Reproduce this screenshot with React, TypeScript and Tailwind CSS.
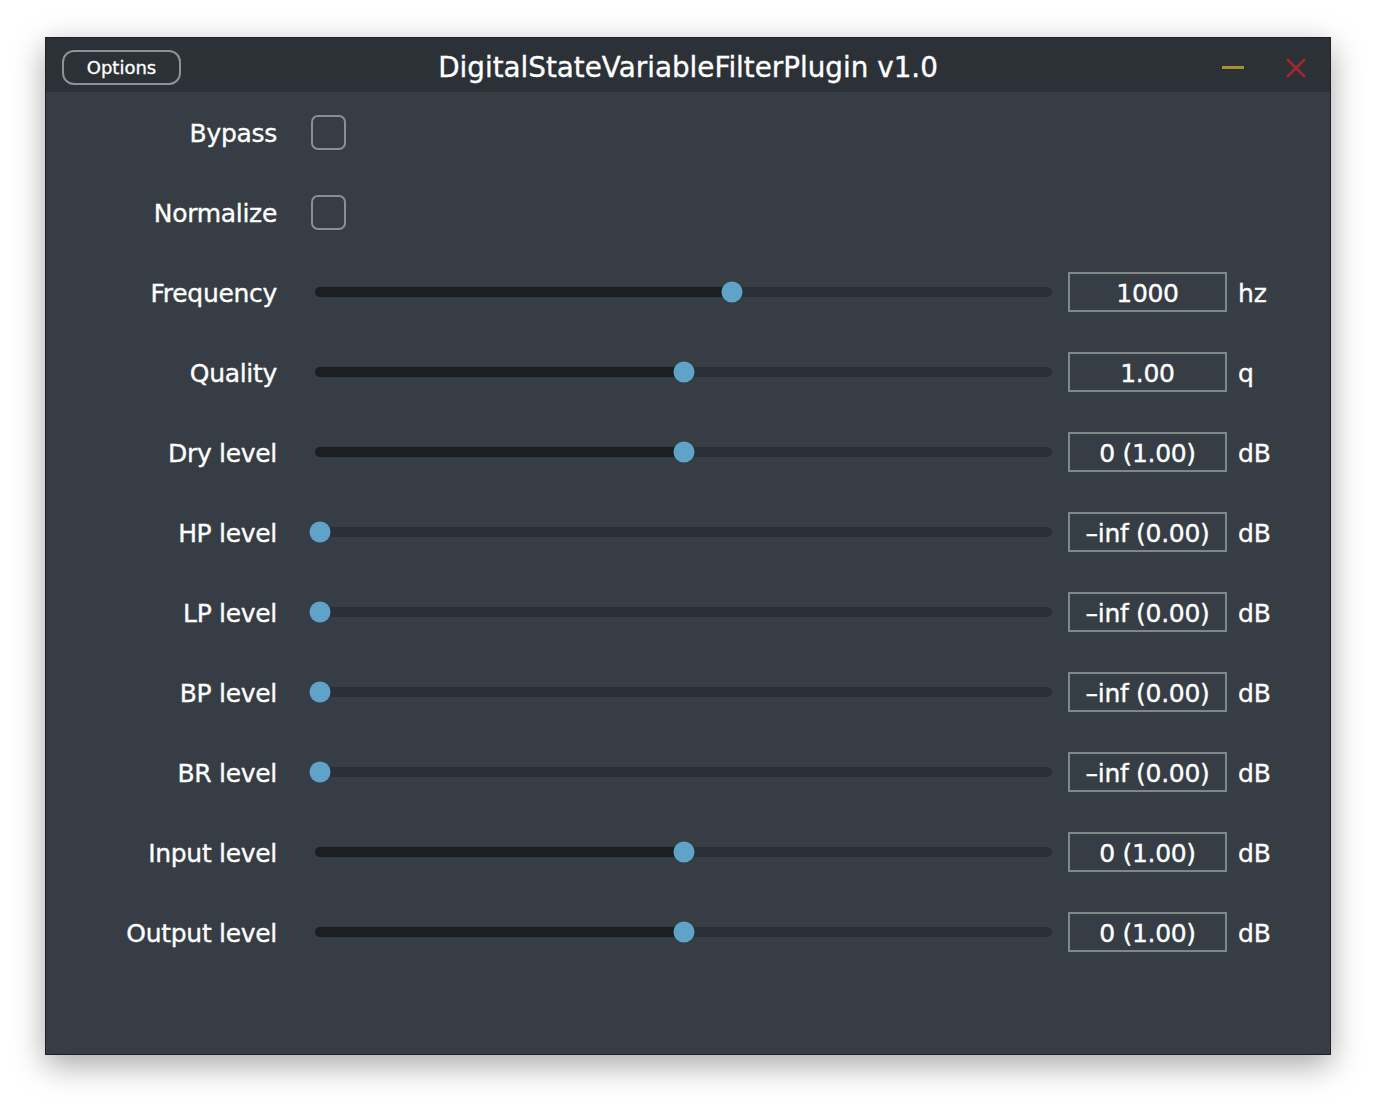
import React from "react";

type Row =
  | { kind: "check"; label: string }
  | { kind: "slider"; label: string; pos: number; value: string; unit: string };

const rows: Row[] = [
  { kind: "check", label: "Bypass" },
  { kind: "check", label: "Normalize" },
  { kind: "slider", label: "Frequency", pos: 0.567, value: "1000", unit: "hz" },
  { kind: "slider", label: "Quality", pos: 0.5, value: "1.00", unit: "q" },
  { kind: "slider", label: "Dry level", pos: 0.5, value: "0 (1.00)", unit: "dB" },
  { kind: "slider", label: "HP level", pos: 0, value: "\u2013inf (0.00)", unit: "dB" },
  { kind: "slider", label: "LP level", pos: 0, value: "\u2013inf (0.00)", unit: "dB" },
  { kind: "slider", label: "BP level", pos: 0, value: "\u2013inf (0.00)", unit: "dB" },
  { kind: "slider", label: "BR level", pos: 0, value: "\u2013inf (0.00)", unit: "dB" },
  { kind: "slider", label: "Input level", pos: 0.5, value: "0 (1.00)", unit: "dB" },
  { kind: "slider", label: "Output level", pos: 0.5, value: "0 (1.00)", unit: "dB" },
];

function Slider({ pos }: { pos: number }) {
  // thumb centre runs from 5px to width-5px
  const left = `calc(5px + (100% - 10px) * ${pos})`;
  return (
    <div className="relative w-[737px] h-[10px] rounded-full bg-[#2a3037]">
      <div className="absolute left-0 top-0 h-full rounded-l-full bg-[#1b1f23]" style={{ width: left }} />
      <div
        className="absolute top-1/2 w-[21px] h-[21px] -translate-x-1/2 -translate-y-1/2 rounded-full bg-[#5fa3c9]"
        style={{ left }}
      />
    </div>
  );
}

export default function App() {
  return (
    <div
      className="min-h-[1108px] bg-white pt-[37px] pl-[45px] [-webkit-text-stroke:0.35px_white]"
      style={{ fontFamily: '"DejaVu Sans", sans-serif' }}
    >
      <div className="w-[1286px] h-[1018px] bg-[#363d44] border border-[#1e2226] shadow-[0_10px_30px_rgba(0,0,0,0.35)] flex flex-col">
        <div className="h-[54px] bg-[#2b3137] flex items-center pt-[5px] px-[16px] relative">
          <button className="w-[119px] h-[35px] rounded-[12px] border-2 border-[#8d9296] text-white text-[18px] leading-none pt-[1px]">
            Options
          </button>
          <div className="absolute inset-0 flex items-center justify-center pt-[5px] pointer-events-none">
            <span className="text-white text-[27.8px]">DigitalStateVariableFilterPlugin v1.0</span>
          </div>
          <div className="ml-auto flex items-center">
            <div className="w-[22px] h-[3px] bg-[#a8912b]" />
            <svg width="22" height="22" viewBox="0 0 22 22" className="ml-[41px] mr-[7px]">
              <path d="M2 2 L20 20 M20 2 L2 20" stroke="#a3282a" strokeWidth="2.5" />
            </svg>
          </div>
        </div>
        <div className="flex flex-col">
          {rows.map((r) => (
            <div key={r.label} className="h-[80px] flex items-center">
              <div className="w-[231px] text-right text-white text-[25px] tracking-[-0.3px] pt-[3px]">{r.label}</div>
              {r.kind === "check" ? (
                <div className="ml-[34px] w-[35px] h-[35px] rounded-[7px] border-2 border-[#8a8f93]" />
              ) : (
                <>
                  <div className="ml-[38px]">
                    <Slider pos={r.pos} />
                  </div>
                  <div className="ml-[16px] w-[159px] h-[40px] border-2 border-[#7f8a88] flex items-center justify-center pt-[3px] text-white text-[25px] tracking-[-0.3px]">
                    {r.value}
                  </div>
                  <div className="ml-[11px] text-white text-[25px] pt-[3px]">{r.unit}</div>
                </>
              )}
            </div>
          ))}
        </div>
      </div>
    </div>
  );
}
